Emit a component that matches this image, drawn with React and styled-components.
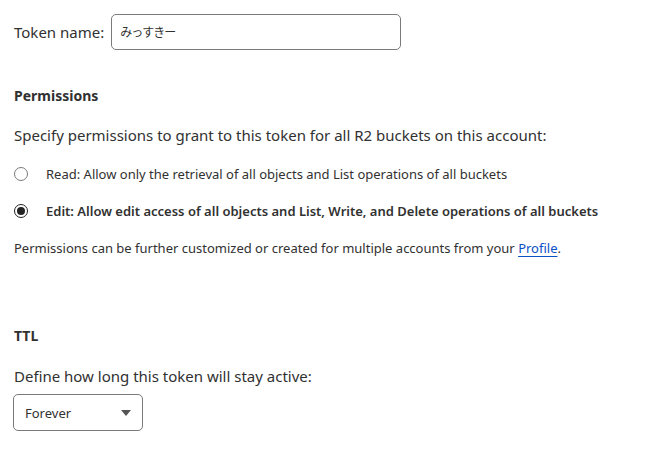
import React, { useState } from 'react';
import styled, { createGlobalStyle } from 'styled-components';

const GlobalStyle = createGlobalStyle`
  body {
    margin: 0;
    background: #fff;
    font-family: "Noto Sans", "Noto Sans CJK JP", sans-serif;
    color: #313131;
  }
`;

const App = () => {
  const [name, setName] = useState('みっすきー');
  const [perm, setPerm] = useState('edit');

  return (
    <Page>
      <GlobalStyle />
      <NameRow>
        <NameLabel htmlFor="tokenName">Token name:</NameLabel>
        <NameInput
          id="tokenName"
          type="text"
          value={name}
          onChange={e => setName(e.target.value)}
        />
      </NameRow>

      <Heading>Permissions</Heading>
      <Lead>Specify permissions to grant to this token for all R2 buckets on this account:</Lead>

      <RadioRow onClick={() => setPerm('read')}>
        <Radio checked={perm === 'read'} />
        <RadioText checked={perm === 'read'}>
          Read: Allow only the retrieval of all objects and List operations of all buckets
        </RadioText>
      </RadioRow>
      <RadioRow onClick={() => setPerm('edit')}>
        <Radio checked={perm === 'edit'} />
        <RadioText checked={perm === 'edit'}>
          Edit: Allow edit access of all objects and List, Write, and Delete operations of all buckets
        </RadioText>
      </RadioRow>

      <Note>
        Permissions can be further customized or created for multiple accounts from your{' '}
        <NoteLink href="#">Profile</NoteLink>.
      </Note>

      <Heading gap={68}>TTL</Heading>
      <Lead gap={18}>Define how long this token will stay active:</Lead>

      <Select>
        <span>Forever</span>
        <Caret />
      </Select>
    </Page>
  );
};

const Page = styled.div`
  padding: 14px 14px;
`;

const NameRow = styled.div`
  display: flex;
  align-items: center;
  gap: 7px;
`;

const NameLabel = styled.label`
  font-size: 15px;
`;

const NameInput = styled.input`
  box-sizing: border-box;
  width: 290px;
  height: 36px;
  padding: 0 10px 0 8px;
  border: 1px solid #7a7a7a;
  border-radius: 5px;
  font-family: "Noto Sans", "Noto Sans CJK JP", sans-serif;
  font-size: 12px;
  letter-spacing: -1px;
  color: #313131;
  outline: none;
`;

const Heading = styled.h3`
  margin: ${p => p.gap || 36}px 0 0;
  font-size: 14px;
  font-weight: 700;
  line-height: 20px;
`;

const Lead = styled.p`
  margin: ${p => p.gap || 17}px 0 0;
  font-size: 15px;
  line-height: 24px;
`;

const RadioRow = styled.div`
  display: flex;
  align-items: center;
  gap: 18px;
  margin-top: 17px;
  line-height: 20px;
  cursor: pointer;
`;

const Radio = styled.span`
  box-sizing: border-box;
  width: 14px;
  height: 14px;
  border-radius: 50%;
  border: 1px solid ${p => (p.checked ? '#222' : '#7a7a7a')};
  display: flex;
  align-items: center;
  justify-content: center;
  &::after {
    content: '';
    width: 8px;
    height: 8px;
    border-radius: 50%;
    background: #222;
    display: ${p => (p.checked ? 'block' : 'none')};
  }
`;

const RadioText = styled.span`
  font-size: 13px;
  font-weight: ${p => (p.checked ? 600 : 400)};
`;

const Note = styled.p`
  margin: 17px 0 0;
  font-size: 13px;
  line-height: 20px;
`;

const NoteLink = styled.a`
  color: #0a51c5;
  text-decoration: underline;
  text-underline-offset: 3px;
`;

const Select = styled.div`
  box-sizing: border-box;
  margin: 6px 0 0 -1px;
  width: 130px;
  height: 37px;
  padding: 0 11px 0 11px;
  border: 1px solid #7a7a7a;
  border-radius: 5px;
  display: flex;
  align-items: center;
  justify-content: space-between;
  font-size: 13px;
`;

const Caret = styled.span`
  width: 0;
  height: 0;
  border-left: 5px solid transparent;
  border-right: 5px solid transparent;
  border-top: 6px solid #555;
`;

export default App;
